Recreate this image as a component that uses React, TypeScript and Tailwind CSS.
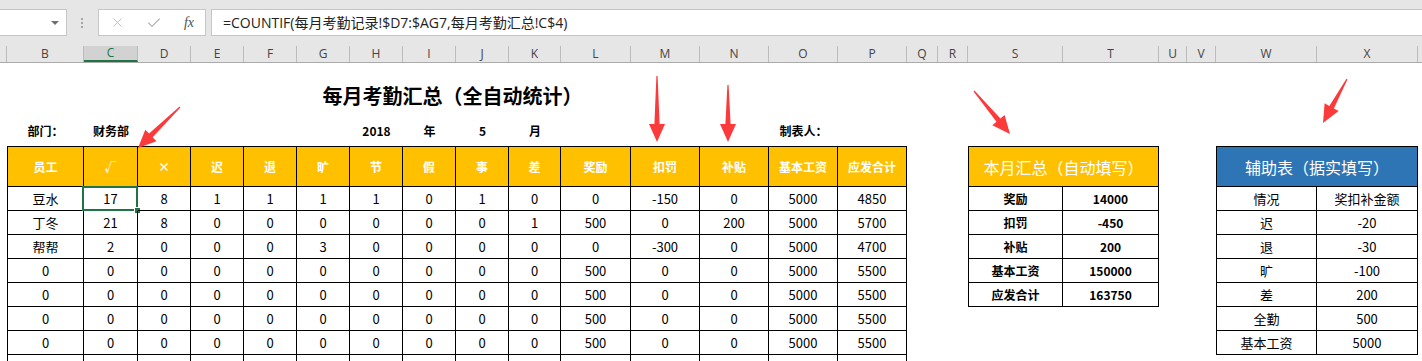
import { X, Check } from "lucide-react";

const colHeads = [
  { l: "", w: "w-[7px]" },
  { l: "B", w: "w-[77px]" },
  { l: "C", w: "w-[54px]", sel: true },
  { l: "D", w: "w-[53px]" },
  { l: "E", w: "w-[53px]" },
  { l: "F", w: "w-[53px]" },
  { l: "G", w: "w-[53px]" },
  { l: "H", w: "w-[53px]" },
  { l: "I", w: "w-[53px]" },
  { l: "J", w: "w-[53px]" },
  { l: "K", w: "w-[52px]" },
  { l: "L", w: "w-[70px]" },
  { l: "M", w: "w-[69px]" },
  { l: "N", w: "w-[69px]" },
  { l: "O", w: "w-[69px]" },
  { l: "P", w: "w-[69px]" },
  { l: "Q", w: "w-[31px]" },
  { l: "R", w: "w-[30px]" },
  { l: "S", w: "w-[95px]" },
  { l: "T", w: "w-[96px]" },
  { l: "U", w: "w-[28px]" },
  { l: "V", w: "w-[29px]" },
  { l: "W", w: "w-[101px]" },
  { l: "X", w: "w-[101px]" },
];

// widths of columns B..P
const mainW = [
  "w-[77px]", "w-[54px]", "w-[53px]", "w-[53px]", "w-[53px]", "w-[53px]", "w-[53px]", "w-[53px]",
  "w-[53px]", "w-[52px]", "w-[70px]", "w-[69px]", "w-[69px]", "w-[69px]", "w-[69px]",
];

const info = ["部门：", "财务部", "", "", "", "", "2018", "年", "5", "月", "", "", "", "制表人：", ""];

const heads = ["员工", "√", "×", "迟", "退", "旷", "节", "假", "事", "差", "奖励", "扣罚", "补贴", "基本工资", "应发合计"];

const zeroRow = ["0", "0", "0", "0", "0", "0", "0", "0", "0", "0", "500", "0", "0", "5000", "5500"];
const rows = [
  ["豆水", "17", "8", "1", "1", "1", "1", "0", "1", "0", "0", "-150", "0", "5000", "4850"],
  ["丁冬", "21", "8", "0", "0", "0", "0", "0", "0", "1", "500", "0", "200", "5000", "5700"],
  ["帮帮", "2", "0", "0", "0", "3", "0", "0", "0", "0", "0", "-300", "0", "5000", "4700"],
  zeroRow,
  zeroRow,
  zeroRow,
  zeroRow,
];

const summary = [
  ["奖励", "14000"],
  ["扣罚", "-450"],
  ["补贴", "200"],
  ["基本工资", "150000"],
  ["应发合计", "163750"],
];

const helper = [
  ["情况", "奖扣补金额"],
  ["迟", "-20"],
  ["退", "-30"],
  ["旷", "-100"],
  ["差", "200"],
  ["全勤", "500"],
  ["基本工资", "5000"],
];

const arrows = [
  [180, 107, 138, 148],
  [657, 76, 657, 142],
  [728, 85, 728, 142],
  [974, 91, 1010, 134],
  [1347, 79, 1323, 123],
];

function arrowPoints(x1: number, y1: number, x2: number, y2: number) {
  const dx = x2 - x1;
  const dy = y2 - y1;
  const len = Math.hypot(dx, dy);
  const ux = dx / len;
  const uy = dy / len;
  const nx = -uy;
  const ny = ux;
  const bx = x2 - ux * 18;
  const by = y2 - uy * 18;
  const p = (x: number, y: number, k: number) => `${x + nx * k},${y + ny * k}`;
  return [p(x1, y1, 0.6), p(bx, by, 2.6), p(bx, by, 8), `${x2},${y2}`, p(bx, by, -8), p(bx, by, -2.6), p(x1, y1, -0.6)].join(" ");
}

function FormulaBar() {
  return (
    <div className="flex h-[46px] items-start bg-[#e6e6e6] pt-[9px]">
      <div className="flex h-[27px] w-[67px] items-center justify-end border border-l-0 border-[#c6c6c6] bg-white pr-[7px]">
        <div className="h-0 w-0 border-x-[4px] border-t-[4px] border-x-transparent border-t-[#707070]" />
      </div>
      <div className="flex h-[27px] w-[31px] flex-col items-center justify-center gap-[2px] pr-[1px]">
        <div className="h-[2px] w-[2px] bg-[#a6a6a6]" />
        <div className="h-[2px] w-[2px] bg-[#a6a6a6]" />
        <div className="h-[2px] w-[2px] bg-[#a6a6a6]" />
      </div>
      <div className="flex h-[27px] w-[108px] items-center border border-[#c6c6c6] bg-white">
        <div className="flex w-[36px] justify-center">
          <X size={15} strokeWidth={1.3} className="text-[#b3b3b3]" />
        </div>
        <div className="flex w-[38px] justify-center">
          <Check size={16} strokeWidth={1.8} className="text-[#b3b3b3]" />
        </div>
        <div className="flex w-[32px] justify-center">
          <span className="font-['Liberation_Serif',serif] text-[14px] italic text-[#505050]">fx</span>
        </div>
      </div>
      <div className="ml-[5px] flex h-[27px] flex-1 items-center border border-r-0 border-[#c6c6c6] bg-white pl-[11px] font-['Open_Sans','Noto_Sans_CJK_SC',sans-serif] text-[14px] text-[#222]">
        =COUNTIF(每月考勤记录!$D7:$AG7,每月考勤汇总!C$4)
      </div>
    </div>
  );
}

function ColumnHeaders() {
  return (
    <div className="flex h-[17px] border-b border-[#ababab] bg-[#e6e6e6] font-['Open_Sans',sans-serif] text-[12px] text-[#444]">
      {colHeads.map((c, i) => (
        <div
          key={i}
          className={`${c.w} flex shrink-0 items-center justify-center border-r border-[#bcbcbc] ${
            c.sel ? "border-b-2 border-b-[#217346] bg-[#d2d2d2] text-[#217346]" : ""
          }`}
        >
          {c.l}
        </div>
      ))}
    </div>
  );
}

function MainTable() {
  return (
    <div className="w-[900px] shrink-0">
      <div className="flex h-[53px] justify-center pr-[9px] pt-[19px]">
        <span className="text-[20px] font-bold leading-[28px] text-black">每月考勤汇总（全自动统计）</span>
      </div>
      <div className="flex h-[30px] items-center text-[12px] font-bold text-black">
        {info.map((t, i) => (
          <div key={i} className={`${mainW[i]} shrink-0 text-center`}>
            {t}
          </div>
        ))}
      </div>
      <div className="flex h-[41px] bg-[#ffc000] text-[12px] font-bold text-white">
        {heads.map((h, i) => (
          <div
            key={i}
            className={`${mainW[i]} flex shrink-0 items-center justify-center border-y border-r border-black ${i === 0 ? "border-l" : ""}`}
          >
            {h}
          </div>
        ))}
      </div>
      {rows.map((r, ri) => (
        <div key={ri} className="flex h-[24px] text-[13px] text-black">
          {r.map((v, i) => (
            <div
              key={i}
              className={`${mainW[i]} relative flex shrink-0 items-center justify-center border-b border-r border-black ${i === 0 ? "border-l" : ""}`}
            >
              {v}
              {ri === 0 && i === 1 && (
                <>
                  <div className="absolute -bottom-px -left-[2px] -right-px -top-px border-2 border-[#217346]" />
                  <div className="absolute -bottom-[4px] -right-[4px] h-[7px] w-[7px] border border-white bg-[#217346]" />
                </>
              )}
            </div>
          ))}
        </div>
      ))}
      <div className="flex h-[10px]">
        {mainW.map((w, i) => (
          <div key={i} className={`${w} shrink-0 border-r border-black ${i === 0 ? "border-l" : ""}`} />
        ))}
      </div>
    </div>
  );
}

function SummaryTable() {
  return (
    <div className="w-[191px] shrink-0 pt-[83px]">
      <div className="flex h-[41px] items-center justify-center border border-black bg-[#ffc000] text-[16px] text-white">
        本月汇总（自动填写）
      </div>
      {summary.map(([a, b], i) => (
        <div key={i} className="flex h-[24px] text-[12px] font-bold text-black">
          <div className="flex w-[95px] items-center justify-center border-x border-b border-black">{a}</div>
          <div className="flex w-[96px] items-center justify-center border-b border-r border-black">{b}</div>
        </div>
      ))}
    </div>
  );
}

function HelperTable() {
  return (
    <div className="w-[202px] shrink-0 pt-[83px]">
      <div className="flex h-[41px] items-center justify-center border border-black bg-[#2e75b6] text-[16px] text-white">
        辅助表（据实填写）
      </div>
      {helper.map(([a, b], i) => (
        <div key={i} className="flex h-[24px] text-[13px] text-black">
          <div className="flex w-[101px] items-center justify-center border-x border-b border-black">{a}</div>
          <div className="flex w-[101px] items-center justify-center border-b border-r border-black">{b}</div>
        </div>
      ))}
    </div>
  );
}

export default function App() {
  return (
    <div className="relative h-[361px] w-[1422px] overflow-hidden bg-white font-['Noto_Sans_CJK_SC',sans-serif]">
      <FormulaBar />
      <ColumnHeaders />
      <div className="flex">
        <div className="w-[7px] shrink-0" />
        <MainTable />
        <div className="w-[61px] shrink-0" />
        <SummaryTable />
        <div className="w-[57px] shrink-0" />
        <HelperTable />
      </div>
      <svg className="pointer-events-none absolute left-0 top-0" width={1422} height={361}>
        {arrows.map(([x1, y1, x2, y2], i) => (
          <polygon key={i} points={arrowPoints(x1, y1, x2, y2)} fill="#fb3b3b" />
        ))}
      </svg>
    </div>
  );
}
